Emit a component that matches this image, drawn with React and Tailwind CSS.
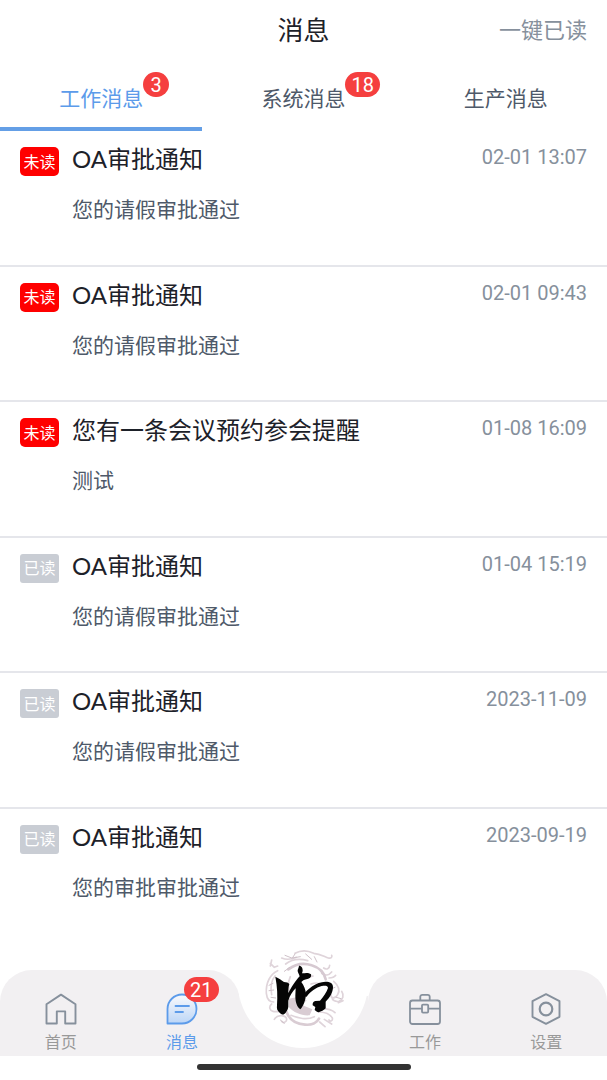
import { useState } from "react";

const TABS = [
  { label: "工作消息", count: 3 },
  { label: "系统消息", count: 18 },
  { label: "生产消息", count: 0 },
];

const MESSAGES = [
  { title: "OA审批通知", body: "您的请假审批通过", time: "02-01 13:07", unread: true },
  { title: "OA审批通知", body: "您的请假审批通过", time: "02-01 09:43", unread: true },
  { title: "您有一条会议预约参会提醒", body: "测试", time: "01-08 16:09", unread: true },
  { title: "OA审批通知", body: "您的请假审批通过", time: "01-04 15:19", unread: false },
  { title: "OA审批通知", body: "您的请假审批通过", time: "2023-11-09", unread: false },
  { title: "OA审批通知", body: "您的审批审批通过", time: "2023-09-19", unread: false },
];

function CountBadge({ children, className }) {
  return (
    <span
      className={`absolute flex h-[25px] min-w-[26px] items-center justify-center rounded-full bg-[#f53f3f] px-[6px] font-['Roboto','Noto_Sans_CJK_SC',sans-serif] text-[20px] leading-none text-white ${className}`}
    >
      {children}
    </span>
  );
}

function HomeIcon() {
  return (
    <svg viewBox="0 0 32 32" className="size-8" fill="none" stroke="#86909c" strokeWidth="1.9" strokeLinejoin="round" aria-hidden="true">
      <path d="M1.5 11.2 16 1.6l14.500 9.600V30.500H20.200V18.400h-8.400v12.100H1.500Z" />
    </svg>
  );
}

function MessageIcon() {
  return (
    <svg viewBox="0 0 32 32" className="size-8" fill="none" stroke="#5c9bea" strokeWidth="1.800" strokeLinecap="round" strokeLinejoin="round" aria-hidden="true">
      <defs>
        <linearGradient id="bubble" x1="0" y1="0" x2="0" y2="1">
          <stop offset="0.1" stopColor="#f4f6fb" />
          <stop offset="1" stopColor="#bcd6f7" />
        </linearGradient>
      </defs>
      <path d="M1.500 30.500V16A14.500 14.500 0 1 1 16 30.500Z" fill="url(#bubble)" />
      <path d="M9.500 13h13.500M9.500 19h7.500" />
    </svg>
  );
}

function WorkIcon() {
  return (
    <svg viewBox="0 0 32 32" className="size-8" fill="none" stroke="#86909c" strokeWidth="1.800" strokeLinejoin="round" aria-hidden="true">
      <rect x="1" y="7.500" width="30" height="23.500" rx="2.500" />
      <path d="M11.300 7.300V3.800a2 2 0 0 1 2-2h5.400a2 2 0 0 1 2 2v3.500M1 15.700h12M19.200 15.700H31" />
      <rect x="13" y="11.600" width="6.200" height="8" rx="1" />
    </svg>
  );
}

function SettingsIcon() {
  return (
    <svg viewBox="0 0 32 32" className="size-8" fill="none" stroke="#86909c" strokeWidth="1.900" strokeLinejoin="round" aria-hidden="true">
      <path d="M16 1.200 29.500 8.200v15.600L16 30.800 2.500 23.800V8.200Z" />
      <circle cx="16" cy="16" r="6.300" strokeWidth="2.200" />
    </svg>
  );
}

function Emblem() {
  return (
    <svg viewBox="31 24 258 258" className="size-[86px]" fill="none" strokeLinecap="round" strokeLinejoin="round" aria-hidden="true">
      <g stroke="#dfd4da" strokeWidth="5">
        <path d="M96 54c14 6 30 4 44-2M136 40c18-10 40-8 56 0 20 2 32 10 44 14 8 2 12-2 10-8M108 72c18-14 44-16 66-10" />
        <path d="M84 92C62 102 48 128 50 160c2 18 10 26 22 26M76 108c-12 14-14 34-10 56M62 70l12 12 10-4M66 60l-4 18" />
        <path d="M222 84c8 6 18 2 18-8M216 100c10 8 22 6 30-4M238 114c10 0 16-2 20-8M252 124c14 12 20 26 12 40s-22 12-20 0M276 154c8 12 4 26-8 30-12 2-22-4-20-12M266 188l14-6" />
        <path d="M66 192c-10 8-6 20 4 22 14 4 26-4 38-4M74 238c8-14 30-14 36-4 4 10-8 18-14 10M206 216c18 0 34 4 42 18 2 8-6 12-10 6M216 206c16 0 32 4 40 12M224 238l22 14M210 246l16 14" />
        <path d="M126 188c12-14 30-12 42-6M144 190l30 20M184 132c12-4 26-4 34 4M162 116l28-8M122 110c-8 18-6 38 0 50" />
      </g>
      <path d="M116 88c24-18 48-20 70-12 26 8 38 24 42 42" stroke="#d6c9d1" strokeWidth="8" />
      <path d="M110 214c8 24 28 38 56 40 20 2 36-6 42-18" stroke="#d9ccd3" strokeWidth="8" />
      <path d="M124 226c22 8 46 16 70 4" stroke="#dfd4da" strokeWidth="5" />
      <g stroke="#cfc1c9" strokeWidth="3">
        <path d="M106 46l20 8M136 42l-8 12 24-4M168 42l18 16M194 50l8 16M104 94l16-12M70 130l-12 6M72 150l-14 2M78 174l-14-2M92 240l12 10M256 142l-14 6M260 172l14 4" />
      </g>
      <path d="M118 176l22-4 24 26 24 10-8 18c-24 2-48-8-62-24Z" fill="#d9ccd3" />
      <g fill="#050505">
        <path d="M77 110c10 5 19 10 26 16 7 0 14 2 16 7-3 8-3 17-3 26 7-14 14-25 20-33 6-8 9-12 14-17-2-8-7-13-6-18 1-5 4-10 4-14 8 0 11 8 11 14 0 4-1 6-2 9 10-1 20-3 27 3 2 7-3 13-11 14-8 2-14 4-18 9 8 11 13 23 14 36-1 18-7 36-17 46-11-8-15-23-15-40 0-8 1-16 1-23-9 9-18 23-22 37v18c-1 8-4 12-8 18-6 8-12 6-18 0-8-6-9-12-8-22 2-28 1-56-5-86Z" />
        <path d="M158 168c15-22 42-42 69-43 15 0 23 5 23 16 0 17-10 32-22 44v20c-5 6-14 9-21 12-5-1-8-4-12-7l2-9-8-5c-1-7 2-12 8-13l14-1c10-11 20-25 24-38 0-8-10-8-19-6-17 4-34 17-45 32Z" />
      </g>
    </svg>
  );
}

function NavItem({ icon, label, active, count }) {
  return (
    <a
      href="#"
      aria-current={active ? "page" : undefined}
      className={`flex flex-col items-center gap-[5px] pt-[23px] text-[16px] leading-6 ${active ? "text-[#5c9bea]" : "text-[#999999]"}`}
    >
      <span className="relative">
        {icon}
        {count ? <CountBadge className="-top-4 left-[18px]">{count}</CountBadge> : null}
      </span>
      <span>{label}</span>
    </a>
  );
}

export default function App() {
  const [active, setActive] = useState(0);

  return (
    <div className="flex min-h-screen flex-col bg-white font-['Lato','Noto_Sans_CJK_SC',sans-serif] text-[#1d2129]">
      <header className="grid grid-cols-3 items-center px-5 py-3">
        <h1 className="col-start-2 text-center text-[26px] leading-9">消息</h1>
        <button type="button" className="justify-self-end text-[22px] leading-9 text-[#86909c]">
          一键已读
        </button>
      </header>

      <div role="tablist" className="grid grid-cols-3">
        {TABS.map((tab, i) => (
          <button
            key={tab.label}
            type="button"
            role="tab"
            aria-selected={i === active}
            onClick={() => setActive(i)}
            className={`border-b-4 pt-[22px] pb-[13px] text-[21px] leading-8 ${
              i === active ? "border-[#649fe6] text-[#5c9bea]" : "border-transparent text-[#4e5969]"
            }`}
          >
            <span className="relative inline-block">
              {tab.label}
              {tab.count ? <CountBadge className="-top-[10px] left-full">{tab.count}</CountBadge> : null}
            </span>
          </button>
        ))}
      </div>

      <ul className="flex flex-1 flex-col">
        {MESSAGES.map((m, i) => (
          <li key={i} className="flex flex-1 border-b-2 border-[#e5e6eb] last:border-transparent">
            <a href="#" className="flex flex-1 items-start px-5 pt-3 pb-8">
              <span
                className={`mt-1 flex h-[29px] w-[39px] shrink-0 items-center justify-center text-[16px] leading-none text-white ${
                  m.unread ? "rounded-[5px] bg-[#ff0000]" : "rounded-[3px] bg-[#c9cdd4]"
                }`}
              >
                {m.unread ? "未读" : "已读"}
              </span>
              <span className="ml-[13px] flex flex-1 flex-col gap-[18px]">
                <span className="text-[24px] leading-8">{m.title}</span>
                <span className="text-[21px] leading-8 text-[#4e5969]">{m.body}</span>
              </span>
              <time className="font-['Roboto',sans-serif] text-[20px] leading-7 text-[#86909c]">{m.time}</time>
            </a>
          </li>
        ))}
      </ul>

      <footer className="pt-[26px]">
        <div className="grid h-[86px]">
          <div aria-hidden="true" className="flex [grid-area:1/1]">
            <div className="flex-1 rounded-t-[32px] bg-[#f2f0f2]" />
            <div className="mt-[26px] w-32 bg-[#f2f0f2]" />
            <div className="flex-1 rounded-t-[32px] bg-[#f2f0f2]" />
          </div>
          <nav className="grid grid-cols-5 [grid-area:1/1]">
            <NavItem icon={<HomeIcon />} label="首页" />
            <NavItem icon={<MessageIcon />} label="消息" active count={21} />
            <div className="relative">
              <a
                href="#"
                aria-label="应用"
                className="absolute bottom-2 left-1/2 flex size-[130px] -translate-x-1/2 items-center justify-center rounded-full bg-white pt-4"
              >
                <Emblem />
              </a>
            </div>
            <NavItem icon={<WorkIcon />} label="工作" />
            <NavItem icon={<SettingsIcon />} label="设置" />
          </nav>
        </div>
        <div className="flex h-6 items-start justify-center pt-2">
          <div className="h-[6px] w-[214px] rounded-full bg-[#333333]" />
        </div>
      </footer>
    </div>
  );
}
